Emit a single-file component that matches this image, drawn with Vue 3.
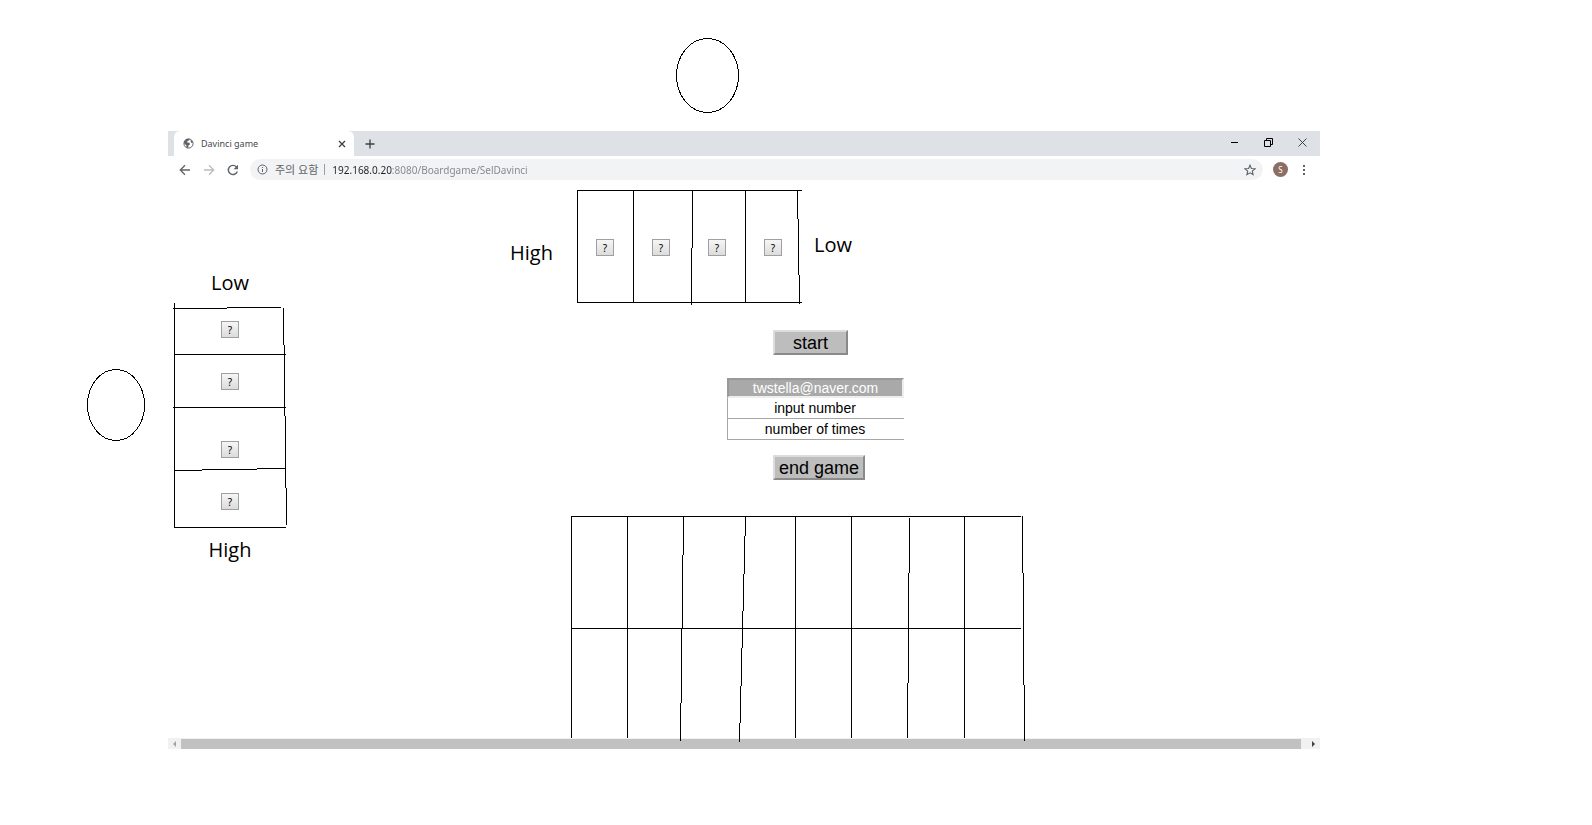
<script setup>
import { ref } from 'vue'

const url = ref('192.168.0.20:8080/Boardgame/SelDavinci')
const user = ref('twstella@naver.com')
const guess = ref('')
const times = ref('')

// Each stroke of a sketched frame: x, y, width, height
const topLines = [
  [1, 0, 225, 1], [1, 112, 225, 1],
  [1, 0, 1, 113], [57, 0, 1, 113], [169, 0, 1, 113],
  [116, 0, 1, 58], [115, 58, 1, 57],
  [221, 0, 1, 29], [222, 29, 1, 56], [223, 85, 1, 29]
]
const sideLines = [
  [1, 0, 1, 225],
  [0, 5, 54, 1], [54, 4, 54, 1],
  [1, 51, 112, 1], [0, 104, 113, 1],
  [1, 167, 28, 1], [29, 166, 55, 1], [84, 165, 29, 1],
  [1, 224, 112, 1],
  [110, 5, 1, 37], [111, 42, 1, 71], [112, 113, 1, 72], [113, 185, 1, 37]
]
const boardLines = [
  [0, 0, 450, 1], [0, 112, 450, 1],
  [0, 0, 1, 222], [56, 0, 1, 222], [224, 0, 1, 222], [280, 0, 1, 222], [393, 0, 1, 222],
  [112, 0, 1, 39], [111, 39, 1, 73], [110, 112, 1, 75], [109, 187, 1, 38],
  [174, 0, 1, 20], [173, 20, 1, 38], [172, 58, 1, 37], [171, 95, 1, 37],
  [170, 132, 1, 38], [169, 170, 1, 37], [168, 207, 1, 19],
  [338, 2, 1, 55], [337, 57, 1, 110], [336, 167, 1, 55],
  [451, 0, 1, 57], [452, 57, 1, 112], [453, 169, 1, 56]
]
</script>

<template>
  <div class="sheet">
    <header class="opponent">
      <svg width="63" height="75" viewBox="0 0 63 75" shape-rendering="crispEdges" aria-label="Player">
        <ellipse cx="31.5" cy="37.5" rx="31" ry="37" fill="none" stroke="#000" />
      </svg>
    </header>

    <div class="middle">
      <aside class="side-player">
        <svg width="58" height="72" viewBox="0 0 58 72" shape-rendering="crispEdges" aria-label="Player">
          <ellipse cx="29" cy="36" rx="28.5" ry="35.5" fill="none" stroke="#000" />
        </svg>
      </aside>

      <section class="window">
        <div class="tabbar">
          <div class="tab">
            <svg width="11" height="11" viewBox="0 0 11 11">
              <circle cx="5.5" cy="5.5" r="4.6" fill="#fff" stroke="#5f6368" />
              <path d="M1 3.500 3.200 1 6.500.8 6 2.500 4.200 3.300 4.300 4.500 6.500 4.700 7 6.500 5.500 7.200 5.300 9.900 3.200 9.500 3.500 7.500 1 5.200z M7.600 1.500 9.800 4 9 5.200 7.700 4z" fill="#5f6368" />
            </svg>
            <span class="tab-title">Davinci game</span>
            <button class="icon" aria-label="Close tab">
              <svg width="8" height="8" viewBox="0 0 8 8"><path d="M1 1l6 6M7 1 1 7" stroke="#3c4043" stroke-width="1.3" /></svg>
            </button>
          </div>
          <button class="icon plus" aria-label="New tab">
            <svg width="10" height="10" viewBox="0 0 10 10"><path d="M5 .5v9M.5 5h9" stroke="#3c4043" stroke-width="1.3" /></svg>
          </button>
          <div class="controls">
            <button class="icon" aria-label="Minimize">
              <svg width="9" height="9" viewBox="0 0 9 9"><path d="M1 4h7v1H1z" /></svg>
            </button>
            <button class="icon" aria-label="Restore">
              <svg width="9" height="9" viewBox="0 0 9 9"><path d="M.5 2.500h6v6h-6z M2.500 2.500v-2h6v6h-2" fill="none" stroke="#000" /></svg>
            </button>
            <button class="icon" aria-label="Close">
              <svg width="9" height="9" viewBox="0 0 9 9"><path d="M.5.5l8 8M8.500.5l-8 8" stroke="#333" stroke-width=".9" /></svg>
            </button>
          </div>
        </div>

        <div class="toolbar">
          <button class="icon" aria-label="Back">
            <svg width="12" height="12" viewBox="0 0 12 12"><path d="M11 6H1.500M6 1.300 1.300 6 6 10.700" fill="none" stroke="#5f6368" stroke-width="1.300" /></svg>
          </button>
          <button class="icon" aria-label="Forward">
            <svg width="12" height="12" viewBox="0 0 12 12"><path d="M1 6h9.500M6 1.300 10.700 6 6 10.700" fill="none" stroke="#babcbe" stroke-width="1.300" /></svg>
          </button>
          <button class="icon" aria-label="Reload">
            <svg width="12" height="12" viewBox="0 0 12 12"><path d="M10.300 7.500A4.600 4.600 0 1 1 9.500 3" fill="none" stroke="#5f6368" stroke-width="1.400" /><path d="M11 .8v4.400H6.600z" fill="#5f6368" /></svg>
          </button>
          <div class="omnibox">
            <svg width="11" height="11" viewBox="0 0 11 11">
              <circle cx="5.500" cy="5.500" r="4.500" fill="none" stroke="#5f6368" />
              <path d="M5 5h1v3H5zM5 3h1v1H5z" fill="#5f6368" />
            </svg>
            <span class="warning">주의 요함</span>
            <span class="divider"></span>
            <input v-model="url" class="url" type="text" aria-label="Address" />
            <button class="icon" aria-label="Bookmark">
              <svg width="12" height="12" viewBox="0 0 12 12"><path d="M6 1.200l1.400 3.300 3.600.3-2.700 2.400.8 3.500L6 8.800l-3.100 1.900.8-3.500L1 4.800l3.600-.3z" fill="none" stroke="#5f6368" stroke-width="1.100" /></svg>
            </button>
          </div>
          <button class="avatar">S</button>
          <button class="icon menu" aria-label="Menu">
            <svg width="4" height="12" viewBox="0 0 4 12"><path d="M1 1h2v2H1zM1 5h2v2H1zM1 9h2v2H1z" fill="#5f6368" /></svg>
          </button>
        </div>

        <main class="page">
          <div class="side">
            <span class="label">Low</span>
            <div class="side-hand">
              <svg class="lines" width="114" height="225" aria-hidden="true">
                <rect v-for="(l, i) in sideLines" :key="i" :x="l[0]" :y="l[1]" :width="l[2]" :height="l[3]" />
              </svg>
              <div class="pair"><button class="card">?</button><button class="card">?</button></div>
              <div class="pair"><button class="card">?</button><button class="card">?</button></div>
            </div>
            <span class="label">High</span>
          </div>

          <div class="center">
            <div class="top-row">
              <span class="label high">High</span>
              <div class="top-hand">
                <svg class="lines" width="227" height="115" aria-hidden="true">
                  <rect v-for="(l, i) in topLines" :key="i" :x="l[0]" :y="l[1]" :width="l[2]" :height="l[3]" />
                </svg>
                <button v-for="n in 4" :key="n" class="card">?</button>
              </div>
              <span class="label low">Low</span>
            </div>

            <button class="action start">start</button>
            <form class="fields" @submit.prevent>
              <input v-model="user" class="user" type="text" aria-label="User" />
              <input v-model="guess" type="text" placeholder="input number" aria-label="input number" />
              <input v-model="times" type="text" placeholder="number of times" aria-label="number of times" />
            </form>
            <button class="action end">end game</button>

            <div class="board">
              <svg width="455" height="222" aria-hidden="true">
                <rect v-for="(l, i) in boardLines" :key="i" :x="l[0]" :y="l[1]" :width="l[2]" :height="l[3]" />
              </svg>
            </div>
          </div>
        </main>

        <div class="scrollbar">
          <button class="icon" aria-label="Scroll left">
            <svg width="13" height="11" viewBox="0 0 13 11"><path d="M8 3v6L5 6z" fill="#a3a3a3" /></svg>
          </button>
          <div class="thumb"></div>
          <button class="icon" aria-label="Scroll right">
            <svg width="19" height="11" viewBox="0 0 19 11"><path d="M11 3v6l3-3z" fill="#404040" /></svg>
          </button>
        </div>
      </section>
    </div>
  </div>
</template>

<style>
body {
  margin: 0;
  background: #fff;
}
</style>

<style scoped>
.sheet {
  padding: 38px 0 76px;
  color: #000;
  font-family: "Noto Sans", "Noto Sans CJK KR", sans-serif;
}
.sheet * {
  box-sizing: border-box;
}
svg {
  display: block;
  flex: none;
}
button {
  font-family: inherit;
  color: inherit;
  padding: 0;
}
.opponent {
  padding: 0 0 18px 676px;
}
.middle {
  display: grid;
  grid-template-columns: 168px minmax(0, 1fr) 272px;
}
.side-player {
  padding: 238px 0 0 87px;
}
.icon {
  display: flex;
  flex: none;
  border: 0;
  background: none;
}

.tabbar {
  display: flex;
  align-items: center;
  height: 25px;
  padding-left: 6px;
  background: #dee1e6;
}
.tab {
  display: flex;
  align-items: center;
  gap: 7px;
  width: 180px;
  height: 25px;
  padding: 0 8px 0 9px;
  border-radius: 6px 6px 0 0;
  background: #fff;
}
.tab-title {
  flex: 1;
  font-size: 9px;
  color: #45494d;
}
.plus {
  margin-left: 11px;
}
.controls {
  display: flex;
  gap: 25px;
  margin-left: auto;
  padding: 0 13px 3px 0;
}

.toolbar {
  display: flex;
  align-items: center;
  gap: 12px;
  height: 28px;
  padding: 0 14px 1px 11px;
}
.omnibox {
  display: flex;
  flex: 1;
  align-items: center;
  height: 21px;
  margin-left: -1px;
  padding: 0 7px;
  border-radius: 11px;
  background: #f1f3f4;
}
.warning {
  margin-left: 7px;
  font-size: 11px;
  line-height: 20px;
  color: #5f6368;
  white-space: nowrap;
}
.divider {
  width: 1px;
  height: 11px;
  margin: 0 7px 0 6px;
  background: #9aa0a6;
}
.url {
  flex: 1;
  min-width: 0;
  height: 20px;
  padding: 0;
  border: 0;
  font-family: "Noto Sans", sans-serif;
  font-size: 10px;
  color: #80868b;
  background: linear-gradient(90deg, #202124 60px, #80868b 60px);
  background-clip: text;
  -webkit-background-clip: text;
  -webkit-text-fill-color: transparent;
}
.avatar {
  width: 15px;
  height: 15px;
  margin: 0 2px 0 -2px;
  border: 0;
  border-radius: 50%;
  background: #8d6e63;
  color: #fff;
  font-size: 8px;
  line-height: 15px;
}

.page {
  display: flex;
  height: 554px;
}
.label {
  font-family: "Open Sans", "Noto Sans", sans-serif;
  font-size: 20px;
  line-height: 28px;
}
.side {
  display: flex;
  flex: none;
  flex-direction: column;
  align-items: center;
  gap: 8px;
  width: 124px;
  padding-top: 85px;
}
.side-hand {
  position: relative;
  display: flex;
  flex-direction: column;
  gap: 51px;
  width: 114px;
  height: 225px;
  margin-top: -2px;
  padding: 18px 0 0 48px;
}
.pair {
  display: flex;
  flex-direction: column;
  gap: 35px;
}
.lines {
  position: absolute;
  inset: 0;
  pointer-events: none;
}
.card {
  flex: none;
  width: 18px;
  height: 17px;
  border: 1px solid #a0a0a0;
  background: linear-gradient(#f6f6f6, #dcdcdc);
  font-size: 10px;
  line-height: 14px;
}
.center {
  display: flex;
  flex: 1;
  flex-direction: column;
  align-items: flex-start;
  min-width: 0;
  padding: 6px 0 0 218px;
}
.top-row {
  display: flex;
  align-items: flex-start;
}
.high {
  width: 66px;
  padding-top: 49px;
}
.low {
  padding: 41px 0 0 11px;
}
.top-hand {
  position: relative;
  display: flex;
  gap: 38px;
  width: 227px;
  height: 115px;
  padding: 49px 0 0 20px;
}
.action {
  height: 25px;
  border: 2px solid;
  border-color: #dcdcdc #8a8a8a #8a8a8a #dcdcdc;
  background: #bdbdbd;
  font-family: "Liberation Sans", Arial, sans-serif;
  font-size: 18px;
  line-height: 20px;
}
.start {
  width: 75px;
  margin: 25px 0 0 263px;
}
.end {
  width: 92px;
  margin: 15px 0 0 263px;
}
.fields {
  display: flex;
  flex-direction: column;
  width: 177px;
  margin: 23px 0 0 217px;
}
.fields input {
  height: 21px;
  padding: 0 2px 0 0;
  border: solid #a6a6a6;
  border-width: 0 0 1px 1px;
  background: #fff;
  color: #000;
  font-family: "Liberation Sans", Arial, sans-serif;
  font-size: 14px;
  text-align: center;
}
.fields input::placeholder {
  color: #000;
  opacity: 1;
}
.fields .user {
  height: 20px;
  padding: 0;
  border-width: 2px;
  border-color: #999 #eee #eee #999;
  background: #a9a9a9;
  color: #fff;
}
.board {
  position: relative;
  z-index: 1;
  margin: 36px 0 0 61px;
}
.board svg {
  overflow: visible;
}
.scrollbar {
  display: flex;
  height: 11px;
  background: #f1f1f1;
}
.thumb {
  flex: 1;
  margin-top: 1px;
  background: #c1c1c1;
}
</style>
